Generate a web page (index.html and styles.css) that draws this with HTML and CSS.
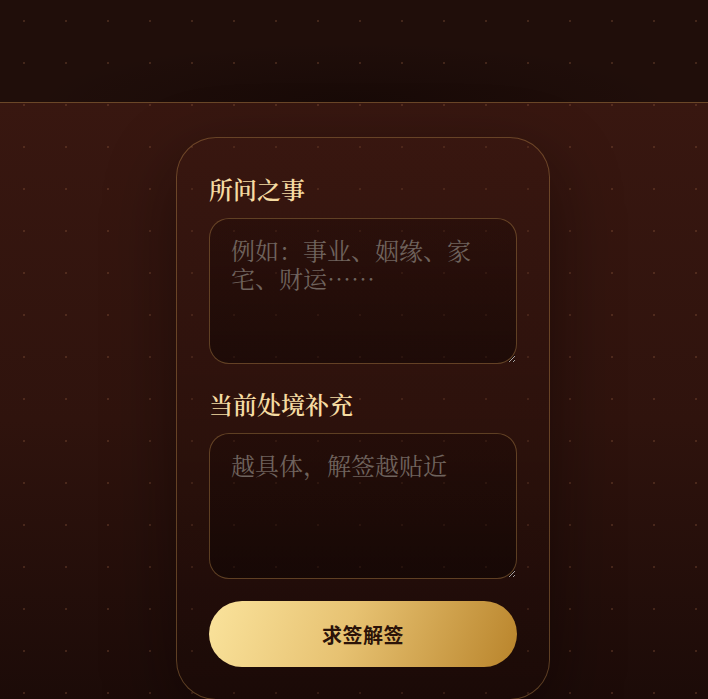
FILE: index.html
```html
<!DOCTYPE html>
<html lang="zh-CN">
<head>
    <meta charset="UTF-8">
    <meta name="viewport" content="width=device-width, initial-scale=1.0">
    <title>求签解签</title>
    <link rel="stylesheet" href="styles.css">
</head>
<body>
    <header class="topbar"></header>
    <main class="page">
        <form class="card" id="askForm">
            <div class="field">
                <label for="question">所问之事</label>
                <textarea id="question" name="question" placeholder="例如：事业、姻缘、家宅、财运……"></textarea>
            </div>
            <div class="field">
                <label for="situation">当前处境补充</label>
                <textarea id="situation" name="situation" placeholder="越具体，解签越贴近"></textarea>
            </div>
            <button type="submit" class="btn-draw">求签解签</button>
        </form>
    </main>
</body>
</html>
```

FILE: styles.css
```css
:root {
    --gold: #f5dba2; /* 标题金色 */
    --gold-line: rgba(176, 128, 72, 0.45);
    --placeholder: #6f635d;
    --dots: radial-gradient(circle, rgba(150, 95, 65, 0.3) 1px, transparent 1.5px);
    --serif: "Noto Serif CJK SC", "Source Han Serif SC", "Noto Sans CJK SC", serif;
    --sans: "Noto Sans CJK SC", "Noto Sans", sans-serif;
}
* {
    box-sizing: border-box;
}
html, body {
    margin: 0;
    padding: 0;
}
body {
    min-height: 100vh;
    background-color: #2a110c;
    background-image: var(--dots), linear-gradient(180deg, #3b1811 0px, #2f130d 420px, #1c0b08 699px);
    background-size: 42px 42px, 100% 100%;
    background-position: 3px 0, 0 0;
    background-repeat: repeat, no-repeat;
    font-family: var(--serif);
    overflow: hidden;
}
.topbar {
    height: 103px;
    border-bottom: 1px solid rgba(140, 96, 52, 0.7);
    background-color: #200e0a;
    background-image: var(--dots), radial-gradient(ellipse 320px 60px at 50% 100%, rgba(10, 3, 2, 0.35), transparent);
    background-size: 42px 42px, 100% 100%;
    background-position: 3px 0, 0 0;
    background-repeat: repeat, no-repeat;
}
.page {
    padding-top: 34px;
}
.card {
    width: 374px;
    margin-left: 176px;
    padding: 36px 32px 32px;
    border: 1px solid var(--gold-line);
    border-radius: 40px;
    background: linear-gradient(180deg, rgba(60, 24, 16, 0.25), rgba(24, 9, 6, 0.3));
    box-shadow: 0 24px 70px rgba(8, 2, 1, 0.45);
}
.field {
    margin-bottom: 25px;
}
.field:last-of-type {
    margin-bottom: 22px;
}
label {
    display: block;
    font-size: 24px;
    font-weight: 600;
    line-height: 30px;
    color: var(--gold);
    margin-bottom: 14px;
}
textarea {
    display: block;
    width: 100%;
    height: 146px;
    padding: 17px 21px;
    border: 1px solid var(--gold-line);
    border-radius: 20px;
    background: linear-gradient(180deg, rgba(22, 6, 4, 0.3), rgba(10, 3, 2, 0.45));
    color: var(--gold);
    font-family: var(--serif);
    font-size: 24px;
    line-height: 28px;
    resize: vertical;
    outline: none;
}
textarea::placeholder {
    color: var(--placeholder);
}
.btn-draw {
    display: block;
    width: 100%;
    height: 66px;
    border: none;
    border-radius: 33px;
    background: linear-gradient(110deg, #fae39c 0%, #e7c272 45%, #b9842b 100%);
    color: #2b1309;
    font-family: var(--sans);
    font-size: 20px;
    font-weight: 700;
    letter-spacing: 0.5px;
    cursor: pointer;
}
```
